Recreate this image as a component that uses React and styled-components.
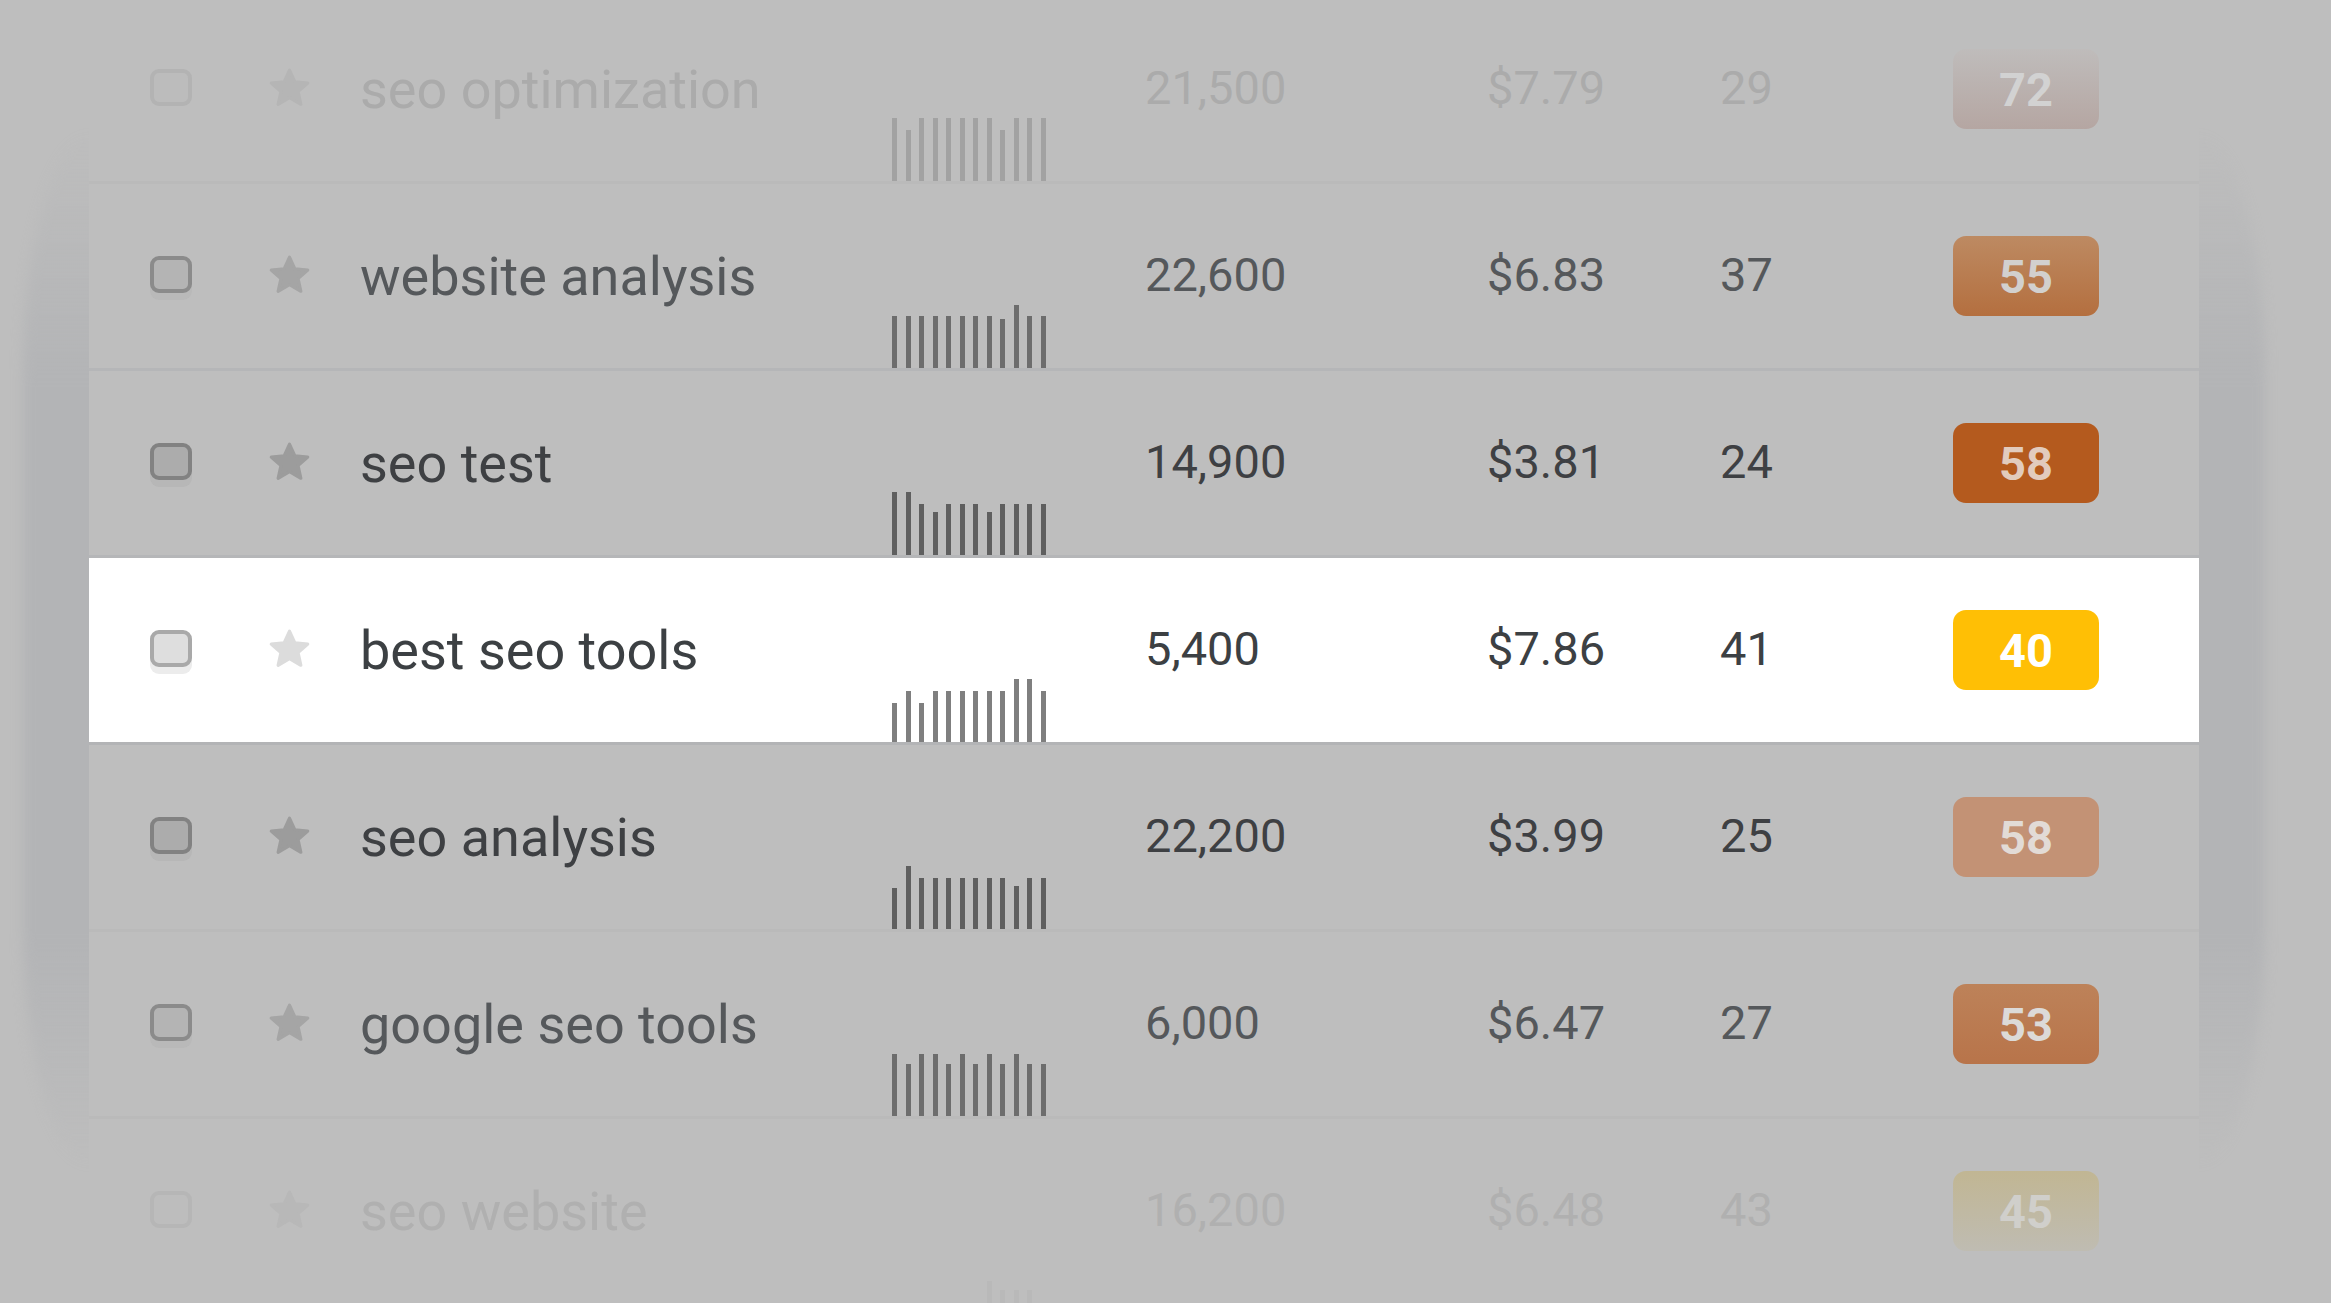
import React from 'react';
import styled, { createGlobalStyle } from 'styled-components';

const GlobalStyle = createGlobalStyle`
  html, body { margin: 0; padding: 0; background: #bebebe; overflow: hidden; }
  body { font-family: Roboto, "Liberation Sans", Arial, sans-serif; }
`;

const Stage = styled.div`
  width: 2331px;
  height: 1303px;
  overflow: hidden;
  box-sizing: border-box;
  padding-left: 89px;
`;

const Panel = styled.div`
  position: relative;
  isolation: isolate;
  width: 2110px;
  margin-top: -3px;
  &::before {
    content: '';
    position: absolute;
    z-index: -1;
    left: -66px;
    right: -66px;
    top: 136px;
    bottom: 139px;
    border-radius: 70px / 240px;
    background: linear-gradient(
      to bottom,
      rgba(180, 181, 183, 0) 0%,
      #b3b4b6 24%,
      #b3b4b6 78%,
      rgba(180, 181, 183, 0) 100%
    );
    filter: blur(6px);
  }
`;

const Row = styled.div`
  display: grid;
  grid-template-columns: 118px 90px 535px 250px 342px 233px 235px 146px;
  align-items: center;
  box-sizing: border-box;
  height: 187px;
  padding-left: 61px;
  background: ${(p) => p.$bg};
  border-bottom: 3px solid ${(p) => p.$sep};
  color: ${(p) => p.$tone.text};
`;

const Check = styled.span`
  display: block;
  width: 42px;
  height: 37px;
  box-sizing: border-box;
  border: 4px solid ${(p) => p.$tone.cbBorder};
  border-radius: 9px;
  background: ${(p) => p.$tone.cbFill};
  box-shadow: 0 7px 0 ${(p) => p.$tone.cbShadow};
  margin-bottom: 4px;
`;

const StarWrap = styled.span`
  display: flex;
  width: 47px;
  height: 47px;
  margin-left: -2px;
  margin-bottom: 1px;
  color: ${(p) => p.$tone.star};
`;

const Keyword = styled.span`
  font-size: 54px;
  white-space: nowrap;
  margin-left: 2px;
`;

const Num = styled.span`
  font-size: 47px;
  white-space: nowrap;
  margin-left: 2px;
  margin-bottom: 4px;
`;

const Chart = styled.div`
  align-self: end;
  display: flex;
  align-items: flex-end;
  gap: 8.5px;
  height: 63px;
  margin-left: -1px;
`;

const Bar = styled.span`
  display: block;
  width: 5px;
  background: ${(p) => p.$color};
`;

const Badge = styled.span`
  display: flex;
  align-items: center;
  justify-content: center;
  width: 146px;
  height: 80px;
  border-radius: 13px;
  background: ${(p) => p.$bg};
  color: ${(p) => p.$fg};
  font-size: 47px;
  font-weight: 700;
`;

const TONES = {
  faintTop: { text: '#ababab', bar: '#a2a2a2', star: '#b5b5b5', cbBorder: '#b3b3b3', cbFill: '#bcbcbc', cbShadow: 'rgba(0,0,0,0)' },
  mid: { text: '#55585b', bar: '#6d6d6d', star: '#a5a5a5', cbBorder: '#8b8b8b', cbFill: '#b4b4b4', cbShadow: '#b9b9b9' },
  dark: { text: '#3e4043', bar: '#5f5f5f', star: '#9c9c9c', cbBorder: '#828282', cbFill: '#acacac', cbShadow: '#b7b7b7' },
  lit: { text: '#3c4043', bar: '#7f7f7f', star: '#dcdcdc', cbBorder: '#a9a9a9', cbFill: '#dedede', cbShadow: '#ececec' },
  faintBottom: { text: '#b0b0b0', bar: '#b9b9b9', star: '#b8b8b8', cbBorder: '#b6b6b6', cbFill: '#bdbdbd', cbShadow: 'rgba(0,0,0,0)' },
};

const ROWS = [
  {
    kw: 'seo optimization', vol: '21,500', cpc: '$7.79', kd: '29', score: '72',
    tone: 'faintTop', bg: '#bebebe', sep: '#bababa',
    badgeBg: 'linear-gradient(to bottom, #bfbcbb, #b5a6a2)', badgeFg: '#d2d2d2',
    bars: [63, 51, 63, 63, 63, 63, 63, 63, 51, 63, 63, 63],
  },
  {
    kw: 'website analysis', vol: '22,600', cpc: '$6.83', kd: '37', score: '55',
    tone: 'mid', bg: '#bebebe', sep: '#b5b6b8',
    badgeBg: 'linear-gradient(to bottom, #bd8a62, #b46f3f)', badgeFg: '#d2d0ce',
    bars: [52, 52, 52, 52, 52, 52, 52, 52, 49, 63, 52, 52],
  },
  {
    kw: 'seo test', vol: '14,900', cpc: '$3.81', kd: '24', score: '58',
    tone: 'dark', bg: '#bebebe', sep: '#b5b6b8',
    badgeBg: '#b45a1e', badgeFg: '#e2cbbd',
    bars: [63, 63, 51, 43, 51, 51, 51, 43, 51, 51, 51, 51],
  },
  {
    kw: 'best seo tools', vol: '5,400', cpc: '$7.86', kd: '41', score: '40',
    tone: 'lit', bg: '#ffffff', sep: '#b3b4b6',
    badgeBg: '#ffbf05', badgeFg: '#ffffff',
    bars: [39, 51, 39, 51, 51, 51, 51, 51, 51, 63, 63, 51],
  },
  {
    kw: 'seo analysis', vol: '22,200', cpc: '$3.99', kd: '25', score: '58',
    tone: 'dark', bg: '#bebebe', sep: '#bababa',
    badgeBg: '#c39275', badgeFg: '#e2dbd6',
    bars: [41, 63, 51, 51, 51, 51, 51, 51, 51, 43, 51, 51],
  },
  {
    kw: 'google seo tools', vol: '6,000', cpc: '$6.47', kd: '27', score: '53',
    tone: 'mid', bg: '#bebebe', sep: '#bababa',
    badgeBg: 'linear-gradient(to bottom, #bd8259, #b8744a)', badgeFg: '#dcdad8',
    bars: [62, 52, 62, 62, 52, 62, 52, 62, 52, 62, 52, 52],
  },
  {
    kw: 'seo website', vol: '16,200', cpc: '$6.48', kd: '43', score: '45',
    tone: 'faintBottom', bg: '#bebebe', sep: 'transparent',
    badgeBg: 'linear-gradient(to bottom, #c1b693, #bfbcb2)', badgeFg: '#d0cfcb',
    bars: [0, 0, 0, 0, 0, 0, 0, 22, 13, 13, 13, 0],
  },
];

function StarIcon() {
  return (
    <svg width="47" height="47" viewBox="0 0 24 24" aria-hidden="true">
      <path
        d="M12 2.6l2.75 6.02 6.57.62-4.94 4.38 1.43 6.45L12 16.7l-5.81 3.37 1.43-6.45-4.94-4.38 6.57-.62z"
        fill="currentColor"
        stroke="currentColor"
        strokeWidth="1.6"
        strokeLinejoin="round"
      />
    </svg>
  );
}

function KeywordRow({ row }) {
  const tone = TONES[row.tone];
  return (
    <Row $bg={row.bg} $sep={row.sep} $tone={tone}>
      <Check $tone={tone} />
      <StarWrap $tone={tone}>
        <StarIcon />
      </StarWrap>
      <Keyword>{row.kw}</Keyword>
      <Chart>
        {row.bars.map((h, i) => (
          <Bar key={i} $color={tone.bar} style={{ height: `${h}px` }} />
        ))}
      </Chart>
      <Num>{row.vol}</Num>
      <Num>{row.cpc}</Num>
      <Num>{row.kd}</Num>
      <Badge $bg={row.badgeBg} $fg={row.badgeFg}>{row.score}</Badge>
    </Row>
  );
}

export default function App() {
  return (
    <>
      <GlobalStyle />
      <Stage>
        <Panel>
          {ROWS.map((row) => (
            <KeywordRow key={row.kw} row={row} />
          ))}
        </Panel>
      </Stage>
    </>
  );
}
